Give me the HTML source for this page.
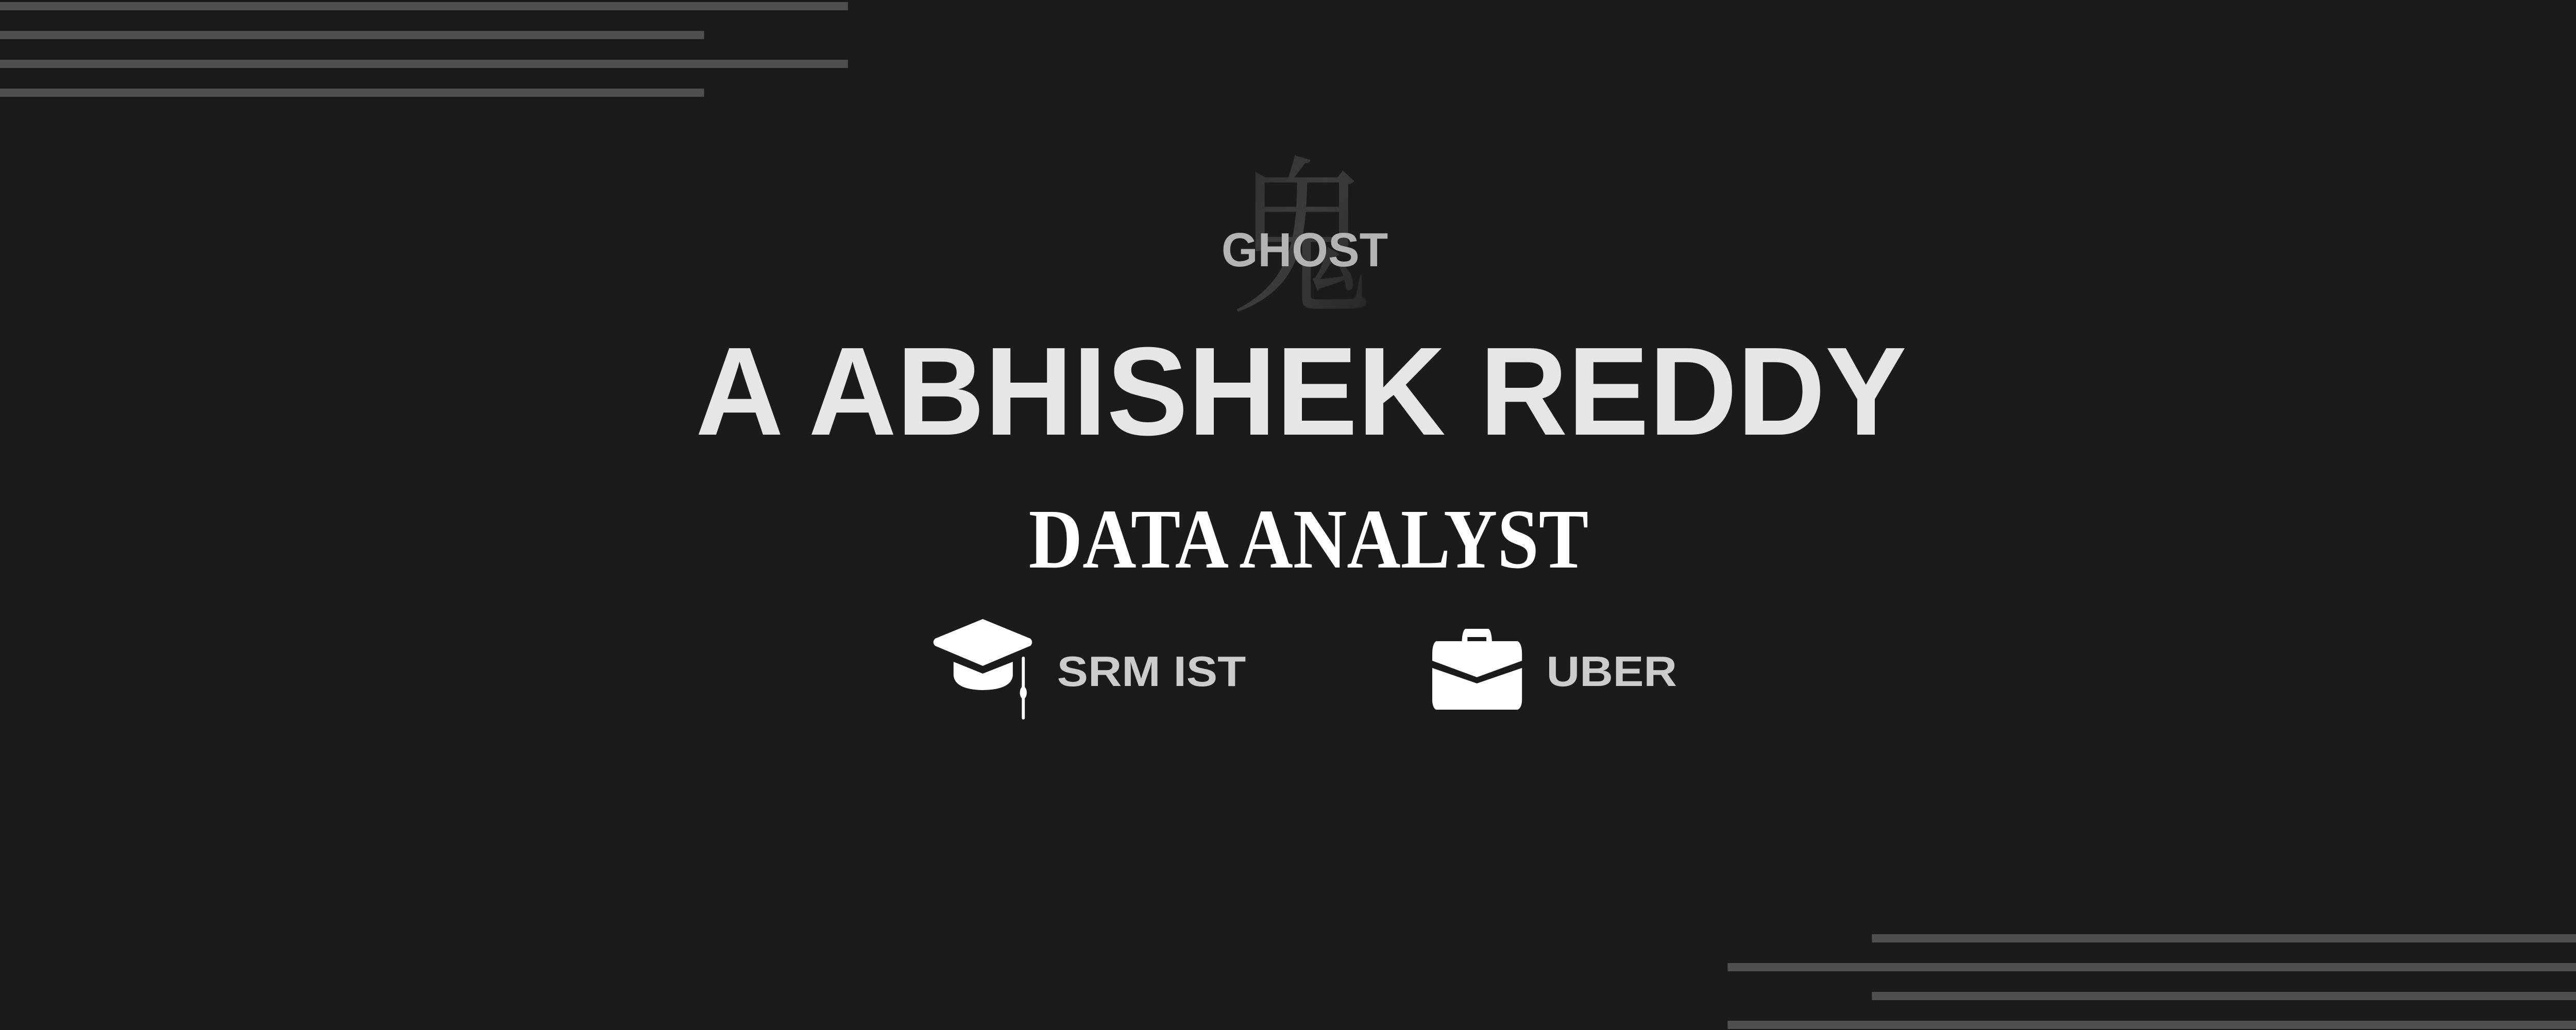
<!DOCTYPE html>
<html><head><meta charset="utf-8"><style>
html,body{margin:0;padding:0;background:#1b1b1b;width:100vw;height:100vh;overflow:hidden}
svg{display:block;position:fixed;left:0;top:0;width:100vw;height:100vh}
</style></head><body>
<svg viewBox="0 0 6000 2000" preserveAspectRatio="none" xmlns="http://www.w3.org/2000/svg">
<defs>
<linearGradient id="kg" x1="0" y1="0" x2="1" y2="1">
<stop offset="0" stop-color="#2a2a2a"/><stop offset="0.5" stop-color="#3c3c3c"/><stop offset="1" stop-color="#222"/>
</linearGradient>
</defs>
<rect width="6000" height="2000" fill="#1b1b1b"/>
<g fill="#4f4f4f">
<rect x="0" y="4" width="1975" height="16"/>
<rect x="0" y="60" width="1640" height="16"/>
<rect x="0" y="116" width="1975" height="16"/>
<rect x="0" y="172" width="1640" height="16"/>
<rect x="4360" y="1814" width="1640" height="16"/>
<rect x="4024" y="1870" width="1976" height="16"/>
<rect x="4360" y="1926" width="1640" height="16"/>
<rect x="4024" y="1982" width="1976" height="16"/>
</g>
<text x="3032" y="580" font-family="'Noto Serif CJK SC','Noto Sans CJK SC',serif" font-size="330" fill="url(#kg)" text-anchor="middle">鬼</text>
<text x="2845" y="517" textLength="388" lengthAdjust="spacingAndGlyphs" font-family="'Liberation Sans',sans-serif" font-weight="bold" font-size="93" fill="#b3b3b3">GHOST</text>
<text x="1620" y="844" textLength="2821" lengthAdjust="spacingAndGlyphs" font-family="'Liberation Sans',sans-serif" font-weight="bold" font-size="244" fill="#e6e6e6">A ABHISHEK REDDY</text>
<text x="2396" y="1102" textLength="1304" lengthAdjust="spacingAndGlyphs" font-family="'Liberation Serif',serif" font-weight="bold" font-size="165" fill="#ffffff">DATA ANALYST</text>
<g fill="#fff">
<path d="M2289 1202 L2400 1240 Q2408 1247 2400 1254 L2289 1293 L2178 1254 Q2170 1247 2178 1240 Z"/>
<path d="M2221 1285 L2289 1308 L2359 1285 L2359 1312 Q2355 1339 2289 1340 Q2225 1339 2221 1312 Z"/>
<rect x="2380" y="1275" width="7" height="122" rx="3"/>
<ellipse cx="2383.5" cy="1345" rx="8" ry="12"/>
</g>
<text x="2462" y="1332" textLength="440" lengthAdjust="spacingAndGlyphs" font-family="'Liberation Sans',sans-serif" font-weight="bold" font-size="83" fill="#cccccc">SRM IST</text>
<g fill="#fff">
<path d="M3413 1221 L3467 1221 Q3474 1225 3475 1245 L3462 1245 L3462 1237 L3418 1237 L3418 1245 L3405 1245 Q3406 1225 3413 1221 Z"/>
<path d="M3345 1245 L3535 1245 Q3545 1250 3545 1270 L3545 1283 L3440 1315 L3336 1283 L3336 1270 Q3336 1250 3345 1245 Z"/>
<path d="M3336 1297 L3440 1327 L3545 1297 L3545 1358 Q3545 1374 3535 1378 L3345 1378 Q3336 1374 3336 1358 Z"/>
</g>
<text x="3602" y="1332" textLength="304" lengthAdjust="spacingAndGlyphs" font-family="'Liberation Sans',sans-serif" font-weight="bold" font-size="83" fill="#cccccc">UBER</text>
</svg>
</body></html>
